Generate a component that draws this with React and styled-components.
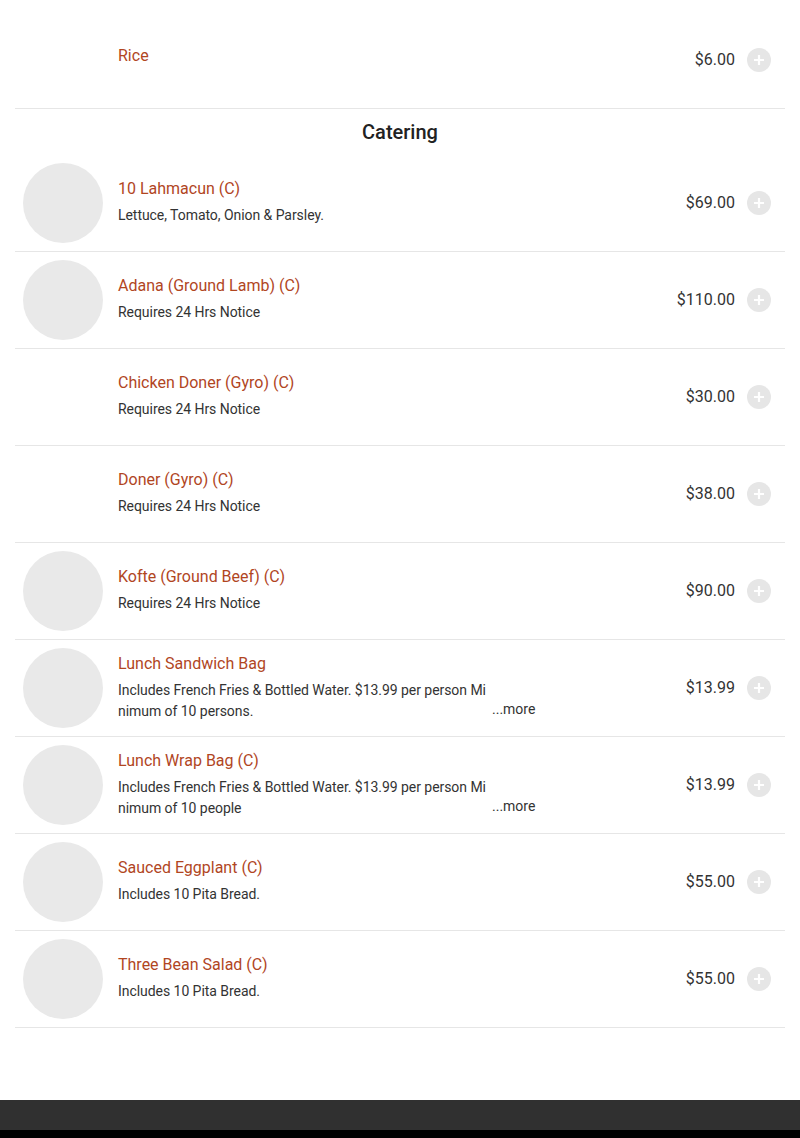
import React from 'react';
import styled, { createGlobalStyle } from 'styled-components';

const GlobalStyle = createGlobalStyle`
  html, body {
    margin: 0;
    padding: 0;
    background: #fff;
    font-family: Roboto, "Liberation Sans", Arial, sans-serif;
    color: #333;
  }
`;

const Page = styled.div`
  display: flex;
  flex-direction: column;
  min-height: 1138px;
`;

const Menu = styled.div`
  padding: 12px 15px 0;
  flex: 1;
`;

const SectionTitle = styled.h2`
  margin: 0;
  height: 46px;
  padding-bottom: 1px;
  box-sizing: border-box;
  display: flex;
  align-items: center;
  justify-content: center;
  font-size: 20px;
  font-weight: 500;
  color: #222;
`;

const Row = styled.div`
  display: flex;
  align-items: center;
  min-height: 96px;
  padding: 0 14px 0 8px;
  border-bottom: 1px solid #e6e6e6;
  box-sizing: content-box;
`;

const Thumb = styled.div`
  flex: none;
  width: 80px;
  height: 80px;
  border-radius: 50%;
  background: ${p => (p.$empty ? 'transparent' : '#e9e9e9')};
  margin-right: 15px;
`;

const Info = styled.div`
  flex: 1;
  display: flex;
  flex-direction: column;
  padding-bottom: ${p => (p.$bare ? '3px' : '2px')};
`;

const Name = styled.div`
  font-size: 16px;
  line-height: 22px;
  color: #b1461f;
  margin-bottom: 5px;
`;

const DescLine = styled.div`
  display: flex;
  align-items: flex-end;
  gap: 4px;
`;

const Desc = styled.div`
  font-size: 14px;
  line-height: 21px;
  color: #333;
  letter-spacing: -0.05px;
  max-width: ${p => (p.$clamped ? '370px' : 'none')};
  word-break: ${p => (p.$clamped ? 'break-all' : 'normal')};
`;

const More = styled.span`
  font-size: 14px;
  line-height: 21px;
  color: #333;
  margin-bottom: 2px;
`;

const Price = styled.div`
  font-size: 16px;
  color: #333;
  margin-right: 12px;
  padding-bottom: 2px;
`;

const AddButton = styled.button`
  flex: none;
  width: 24px;
  height: 24px;
  padding: 0;
  border: none;
  border-radius: 50%;
  background: #e6e6e6;
  display: flex;
  align-items: center;
  justify-content: center;
  cursor: pointer;
`;

const Footer = styled.footer`
  margin-top: 72px;
  height: 30px;
  background: #303030;
`;

const FooterBottom = styled.div`
  height: 8px;
  background: #000;
`;

const PlusIcon = () => (
  <svg width="12" height="12" viewBox="0 0 12 12">
    <path d="M6 1v10M1 6h10" stroke="#fff" strokeWidth="2.2" />
  </svg>
);

const catering = [
  { name: '10 Lahmacun (C)', desc: 'Lettuce, Tomato, Onion & Parsley.', price: '$69.00', img: true },
  { name: 'Adana (Ground Lamb) (C)', desc: 'Requires 24 Hrs Notice', price: '$110.00', img: true },
  { name: 'Chicken Doner (Gyro) (C)', desc: 'Requires 24 Hrs Notice', price: '$30.00', img: false },
  { name: 'Doner (Gyro) (C)', desc: 'Requires 24 Hrs Notice', price: '$38.00', img: false },
  { name: 'Kofte (Ground Beef) (C)', desc: 'Requires 24 Hrs Notice', price: '$90.00', img: true },
  {
    name: 'Lunch Sandwich Bag',
    desc: 'Includes French Fries & Bottled Water. $13.99 per person Minimum of 10 persons.',
    price: '$13.99',
    img: true,
    more: true,
  },
  {
    name: 'Lunch Wrap Bag (C)',
    desc: 'Includes French Fries & Bottled Water. $13.99 per person Minimum of 10 people',
    price: '$13.99',
    img: true,
    more: true,
  },
  { name: 'Sauced Eggplant (C)', desc: 'Includes 10 Pita Bread.', price: '$55.00', img: true },
  { name: 'Three Bean Salad (C)', desc: 'Includes 10 Pita Bread.', price: '$55.00', img: true },
];

const MenuItem = ({ item }) => (
  <Row>
    <Thumb $empty={!item.img} />
    <Info $bare={!item.desc}>
      <Name>{item.name}</Name>
      {item.desc && (
        <DescLine>
          <Desc $clamped={item.more}>{item.desc}</Desc>
          {item.more && <More>...more</More>}
        </DescLine>
      )}
    </Info>
    <Price>{item.price}</Price>
    <AddButton aria-label="Add">
      <PlusIcon />
    </AddButton>
  </Row>
);

export default function App() {
  return (
    <Page>
      <GlobalStyle />
      <Menu>
        <MenuItem item={{ name: 'Rice', price: '$6.00', img: false }} />
        <SectionTitle>Catering</SectionTitle>
        {catering.map(item => (
          <MenuItem key={item.name} item={item} />
        ))}
      </Menu>
      <Footer />
      <FooterBottom />
    </Page>
  );
}
